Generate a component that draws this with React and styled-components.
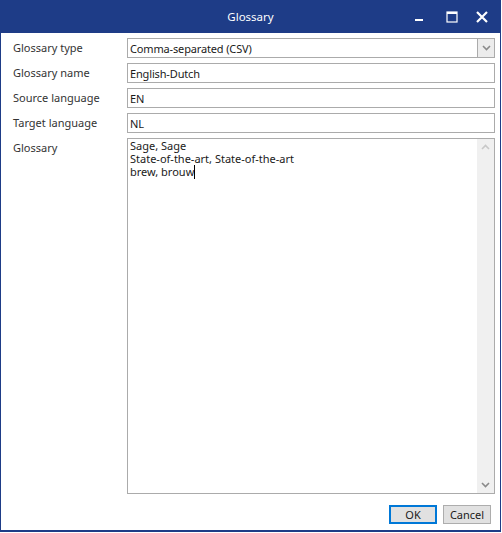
import React from "react";
import styled, { createGlobalStyle } from "styled-components";

const GlobalStyle = createGlobalStyle`
  html, body {
    margin: 0;
    padding: 0;
    background: #ffffff;
  }
  body {
    font-family: "Noto Sans", "Open Sans", sans-serif;
  }
`;

const Window = styled.div`
  width: 501px;
  height: 532px;
  box-sizing: border-box;
  border: 1px solid #1e3c87;
  border-top: none;
  border-bottom-width: 2px;
  display: flex;
  flex-direction: column;
  background: #ffffff;
  box-shadow: 0 1px 0 #b8b8b8;
`;

const TitleBar = styled.div`
  height: 33px;
  flex-shrink: 0;
  background: #1e3c87;
  color: #ffffff;
  display: flex;
  align-items: center;
  justify-content: center;
  position: relative;
  font-size: 11.5px;
  margin: 0 -1px;
`;

const Controls = styled.div`
  position: absolute;
  right: 11px;
  top: 0;
  height: 33px;
  display: flex;
  align-items: center;
  gap: 14px;
`;

const ControlIcon = styled.svg`
  width: 16px;
  height: 16px;
  display: block;
`;

const Body = styled.div`
  flex: 1;
  display: flex;
  flex-direction: column;
  padding: 5px 5px 6px 11px;
`;

const Form = styled.div`
  flex: 1;
  display: grid;
  grid-template-columns: 115px 1fr;
  grid-template-rows: 20px 20px 20px 20px 1fr;
  row-gap: 5px;
`;

const Label = styled.div`
  font-size: 11px;
  color: #333333;
  padding-left: 1px;
  line-height: 20px;
`;

const Field = styled.div`
  border: 1px solid #ababab;
  background: #ffffff;
  display: flex;
  align-items: center;
  font-size: 11px;
  letter-spacing: -0.15px;
  color: #1a1a1a;
  padding-left: 2px;
  position: relative;
  overflow: hidden;
`;

const DropButton = styled.div`
  position: absolute;
  right: 0;
  top: 0;
  bottom: 0;
  width: 16px;
  border-left: 1px solid #ababab;
  background: #ececec;
  display: flex;
  align-items: center;
  justify-content: center;
`;

const TextArea = styled.div`
  border: 1px solid #ababab;
  background: #ffffff;
  display: flex;
`;

const TextContent = styled.div`
  flex: 1;
  font-size: 11px;
  line-height: 12.5px;
  color: #1a1a1a;
  padding: 1px 2px;
  white-space: pre;
`;

const Caret = styled.span`
  display: inline-block;
  width: 1px;
  height: 14px;
  background: #000;
  vertical-align: -3px;
`;

const ScrollBar = styled.div`
  width: 17px;
  background: #f0f0f0;
  display: flex;
  flex-direction: column;
  justify-content: space-between;
  align-items: center;
  padding: 5px 0;
`;

const Footer = styled.div`
  display: flex;
  justify-content: flex-end;
  gap: 6px;
  padding-top: 11px;
  padding-right: 4px;
`;

const Button = styled.div`
  width: ${(p) => (p.$primary ? "44px" : "46px")};
  height: ${(p) => (p.$primary ? "15px" : "17px")};
  background: #e1e1e1;
  border: ${(p) => (p.$primary ? "2px solid #0078d7" : "1px solid #adadad")};
  display: flex;
  align-items: center;
  justify-content: center;
  font-size: 11px;
  color: #1a1a1a;
`;

function Chevron({ up }) {
  return (
    <svg width="9" height="6" viewBox="0 0 9 6">
      <path
        d={up ? "M1 5 L4.5 1.5 L8 5" : "M1 1 L4.5 4.5 L8 1"}
        fill="none"
        stroke={up ? "#c8c8c8" : "#8a8a8a"}
        strokeWidth="1.6"
      />
    </svg>
  );
}

export default function App() {
  return (
    <>
      <GlobalStyle />
      <Window>
        <TitleBar>
          Glossary
          <Controls>
            <ControlIcon viewBox="0 0 16 16">
              <rect x="1" y="10" width="8" height="2" fill="#fff" />
            </ControlIcon>
            <ControlIcon viewBox="0 0 16 16">
              <rect x="3" y="3" width="10" height="10" fill="none" stroke="#fff" strokeWidth="1.2" />
              <rect x="3" y="3" width="10" height="2" fill="#fff" />
            </ControlIcon>
            <ControlIcon viewBox="0 0 16 16">
              <path d="M3 3 L13 13 M13 3 L3 13" stroke="#fff" strokeWidth="2.2" />
            </ControlIcon>
          </Controls>
        </TitleBar>
        <Body>
          <Form>
            <Label>Glossary type</Label>
            <Field>
              Comma-separated (CSV)
              <DropButton>
                <Chevron />
              </DropButton>
            </Field>
            <Label>Glossary name</Label>
            <Field>English-Dutch</Field>
            <Label>Source language</Label>
            <Field>EN</Field>
            <Label>Target language</Label>
            <Field>NL</Field>
            <Label>Glossary</Label>
            <TextArea>
              <TextContent>
                {"Sage, Sage\nState-of-the-art, State-of-the-art\nbrew, brouw"}
                <Caret />
              </TextContent>
              <ScrollBar>
                <Chevron up />
                <Chevron />
              </ScrollBar>
            </TextArea>
          </Form>
          <Footer>
            <Button $primary>OK</Button>
            <Button>Cancel</Button>
          </Footer>
        </Body>
      </Window>
    </>
  );
}
